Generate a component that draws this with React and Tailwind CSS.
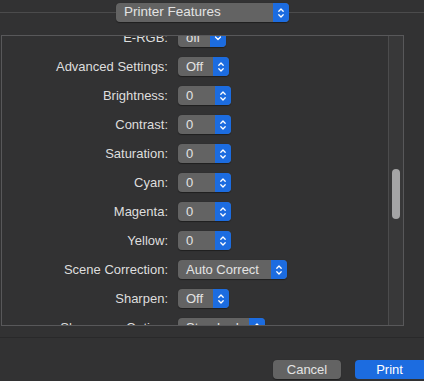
import React from 'react'

// macOS print dialog, "Printer Features" pane (dark mode)

const Chevrons = ({ single = false }) => (
  <svg width="8" height="12" viewBox="0 0 8 12" fill="none" stroke="#ffffff" strokeWidth="1.3" strokeLinecap="round" strokeLinejoin="round">
    {single ? (
      <path d="M1.5 5 L4 7.5 L6.5 5" />
    ) : (
      <>
        <path d="M1.8 4.2 L4 2 L6.2 4.2" />
        <path d="M1.8 7.8 L4 10 L6.2 7.8" />
      </>
    )}
  </svg>
)

const Popup = ({ value, width, single }) => (
  <div className="flex h-[19px] rounded-[4px] bg-[#636363] shadow-[0_0.5px_1px_rgba(0,0,0,0.4)] overflow-hidden" style={{ width }}>
    <div className="flex-1 flex items-center pl-2 text-[#e3e3e3]">{value}</div>
    <div className="w-4 flex items-center justify-center bg-[#1c6ce0]">
      <Chevrons single={single} />
    </div>
  </div>
)

const rows = [
  { label: 'E-RGB:', value: 'off', width: 48, single: true },
  { label: 'Advanced Settings:', value: 'Off', width: 51 },
  { label: 'Brightness:', value: '0', width: 53 },
  { label: 'Contrast:', value: '0', width: 53 },
  { label: 'Saturation:', value: '0', width: 53 },
  { label: 'Cyan:', value: '0', width: 53 },
  { label: 'Magenta:', value: '0', width: 53 },
  { label: 'Yellow:', value: '0', width: 53 },
  { label: 'Scene Correction:', value: 'Auto Correct', width: 109 },
  { label: 'Sharpen:', value: 'Off', width: 51 },
  { label: 'Sharpness Option:', value: 'Standard', width: 87 },
]

export default function App() {
  return (
    <div className="w-[424px] h-[381px] bg-[#323233] flex flex-col overflow-hidden text-[13px] text-[#dedede]" style={{ fontFamily: '"Liberation Sans", Arial, sans-serif' }}>
      {/* header popup with separator */}
      <div className="h-[35px] flex items-start">
        <div className="w-[116px] h-px bg-[#4b4b4c] mt-[12px]" />
        <div className="mt-[3px] w-[173px] h-[19px] flex rounded-[4px] bg-[#636363] overflow-hidden shadow-[0_0.5px_1px_rgba(0,0,0,0.4)]">
          <div className="flex-1 flex items-center pl-2 text-[13.5px] text-[#e3e3e3]">Printer Features</div>
          <div className="w-4 flex items-center justify-center bg-[#1c6ce0]">
            <Chevrons />
          </div>
        </div>
        <div className="flex-1 h-px bg-[#4b4b4c] mt-[12px]" />
      </div>

      {/* scroll box */}
      <div className="ml-px w-[403px] h-[291px] border border-[#58585a] flex overflow-hidden">
        <div className="flex-1 overflow-hidden">
          <div className="mt-[-8px] flex flex-col gap-[10px]">
            {rows.map((r) => (
              <div key={r.label} className="flex items-center h-[19px]">
                <div className="w-[166px] text-right pr-0 whitespace-nowrap">{r.label}</div>
                <div className="ml-[10px]">
                  <Popup value={r.value} width={r.width} single={r.single} />
                </div>
              </div>
            ))}
          </div>
        </div>
        <div className="w-[15px] bg-[#383839] border-l border-[#4c4c4d] flex justify-center pt-[133px]">
          <div className="w-2 h-[50px] rounded-full bg-[#a4a4a5]" />
        </div>
      </div>

      <div className="mt-[11px] h-px bg-[#29292a]" />

      {/* buttons */}
      <div className="mt-[22px] flex justify-end gap-[14px]">
        <button className="w-[68px] h-[19px] rounded-[4px] bg-[#636363] text-[#e3e3e3] text-[13px] leading-none shadow-[0_0.5px_1px_rgba(0,0,0,0.4)]">Cancel</button>
        <button className="w-[69px] h-[19px] rounded-l-[4px] bg-[#1c6ce0] text-white text-[13px] leading-none">Print</button>
      </div>
    </div>
  )
}
